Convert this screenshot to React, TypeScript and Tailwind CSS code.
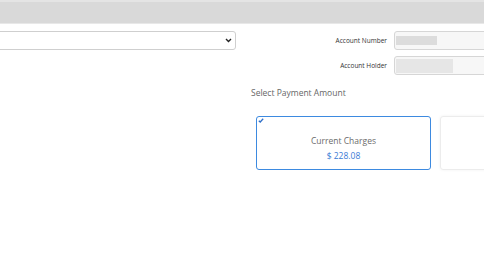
export default function App() {
  return (
    <div className="relative w-[484px] h-[261px] overflow-hidden bg-white" style={{ fontFamily: '"Open Sans", "Liberation Sans", sans-serif' }}>
      <div className="h-[2px] bg-[#e4e4e4]" />
      <div className="h-[22px] bg-[#d9d9d9] border-b border-[#e8e8e8]" />
      <div className="flex">
        <div className="w-[236px] shrink-0 pt-[7px]">
          <div className="ml-[-10px] w-[246px] h-[19px] border border-[#cfcfcf] rounded-[3px] bg-white flex items-center justify-end pr-[3px]">
            <svg width="7" height="5" viewBox="0 0 7 5" fill="none">
              <path d="M1 1 L3.5 3.5 L6 1" stroke="#222" strokeWidth="1.4" />
            </svg>
          </div>
        </div>
        <div className="flex-1 ml-[4px] pt-[7px]">
          <div className="flex flex-col gap-[6px]">
            <div className="flex items-center h-[19px]">
              <div className="w-[147px] text-right text-[6.5px] text-[#333]">Account Number</div>
              <div className="ml-[7px] w-[120px] h-[19px] border border-[#d6d6d6] rounded-[3px] bg-[#f7f7f7] flex items-center pl-[1px] shrink-0">
                <div className="w-[41px] h-[9px] bg-[#dcdcdc]" />
              </div>
            </div>
            <div className="flex items-center h-[19px]">
              <div className="w-[147px] text-right text-[6.5px] text-[#333]">Account Holder</div>
              <div className="ml-[7px] w-[120px] h-[19px] border border-[#d6d6d6] rounded-[3px] bg-[#f7f7f7] flex items-center pl-[1px] shrink-0">
                <div className="w-[57px] h-[14px] bg-[#e6e6e6]" />
              </div>
            </div>
          </div>
          <div className="ml-[11px] mt-[12px] text-[8.5px] text-[#666] leading-[12px]">Select Payment Amount</div>
          <div className="flex gap-[9px] ml-[16px] mt-[17px]">
            <div className="relative w-[175px] h-[54px] shrink-0 border-[1.5px] border-[#3d8ae0] rounded-[3px] flex flex-col items-center justify-center pt-[10px]">
              <svg className="absolute left-[1px] top-[1px]" width="6" height="5" viewBox="0 0 6 5" fill="none">
                <path d="M0.8 2.8 L2.2 4 L5.2 0.8" stroke="#2f6fc8" strokeWidth="1.3" />
              </svg>
              <div className="text-[8.5px] text-[#6b6b6b] leading-[12px]">Current Charges</div>
              <div className="text-[8.5px] text-[#3a7bd5] leading-[12px] mt-[3px]">$ 228.08</div>
            </div>
            <div className="w-[175px] h-[54px] shrink-0 border border-[#ececec] rounded-[3px] shadow-[0_0_3px_rgba(0,0,0,0.06)]" />
          </div>
        </div>
      </div>
    </div>
  );
}
